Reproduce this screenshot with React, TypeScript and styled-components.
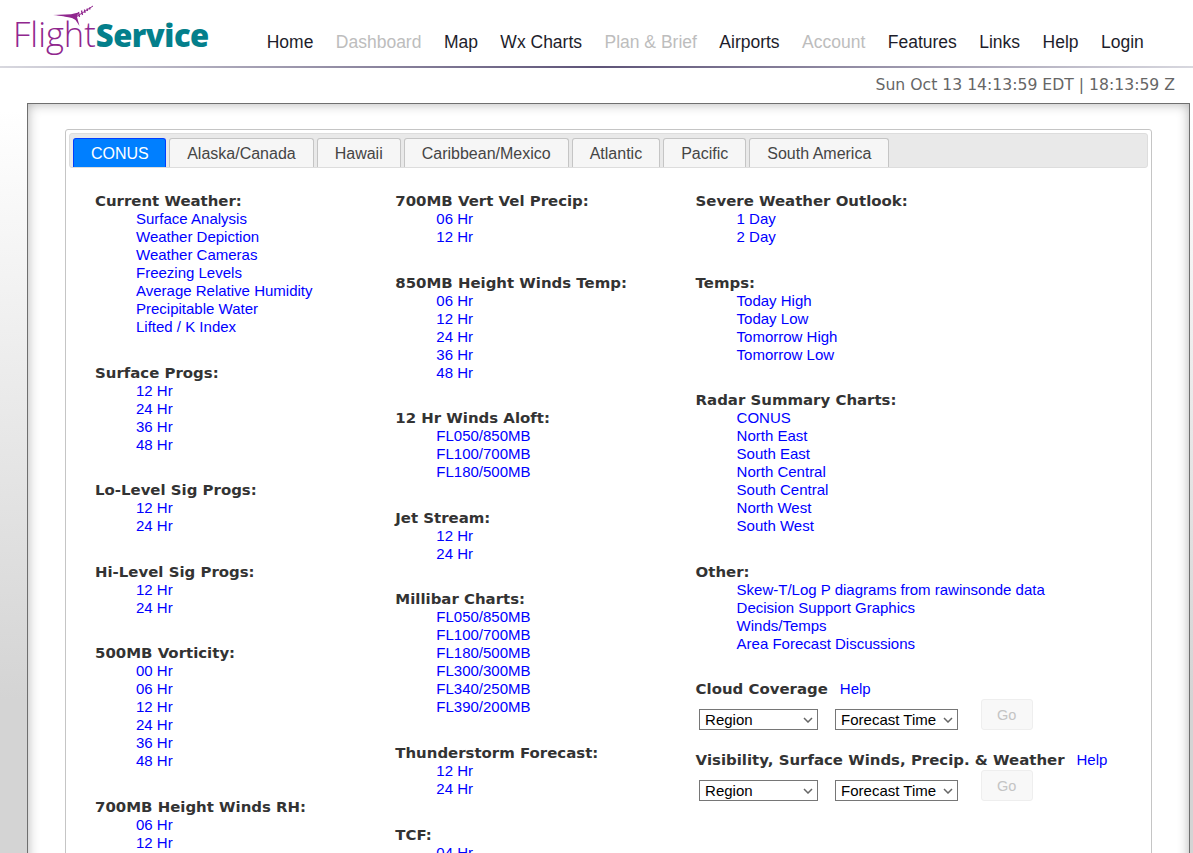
import React from "react";
import styled, { createGlobalStyle } from "styled-components";

const chevron = `url("data:image/svg+xml,%3Csvg xmlns='http://www.w3.org/2000/svg' width='10' height='6' viewBox='0 0 10 6'%3E%3Cpath d='M1 1 L5 5 L9 1' fill='none' stroke='%23666' stroke-width='1.5'/%3E%3C/svg%3E")`;

const Global = createGlobalStyle`
  html, body { margin: 0; padding: 0; height: 853px; overflow: hidden; background: #fff; }
  body { font-family: "Liberation Sans", Arial, sans-serif; }
`;
const Page = styled.div`
  width: 1193px; height: 853px; overflow: hidden;
  background: linear-gradient(to bottom, #ffffff 0, #ffffff 110px, #d4d4d4 700px);
`;
const Header = styled.header`
  height: 66px; background: #fff; display: flex; align-items: flex-start; position: relative;
`;
const Logo = styled.div`
  position: relative; width: 266.7px; height: 66px; flex: none;
`;
const LogoText = styled.div`
  position: absolute; left: 13px; top: 10px; white-space: nowrap; line-height: 48px;
`;
const LogoLight = styled.span`
  font-family: "Open Sans", sans-serif; font-weight: 300; font-size: 34.5px; color: #90278e;
`;
const LogoBold = styled.span`
  font-family: "Open Sans", sans-serif; font-weight: 800; font-size: 31px; letter-spacing: -0.5px; color: #047f8b;
`;
const Bird = styled.svg`
  position: absolute; left: 50px; top: 3px;
`;
const Nav = styled.nav`
  display: flex; gap: 22.45px; padding-top: 32px; font-size: 17.5px; line-height: 20px;
`;
const NavLink = styled.a<{ $off?: boolean }>`
  color: ${p => (p.$off ? "#bdbdbd" : "#1d1d2b")};
  flex: none; white-space: nowrap;
`;
const Rule = styled.div`
  height: 2px;
  background: linear-gradient(to right, #d8d8df 0, #5e5478 50%, #d8d8df 100%);
`;
const Clock = styled.div`
  height: 35px; background: #fff; text-align: right; padding-right: 18px; color: #666;
  font-family: "DejaVu Sans", sans-serif; font-size: 15.65px; line-height: 34px;
`;
const Panel = styled.main`
  margin: 0 3px 0 27px; height: 760px; background: #fff;
  border: 1px solid #6f6f6f; border-bottom: none;
  box-shadow: inset 0 0 12px rgba(0,0,0,.3);
  padding: 25px 37px 0 37px;
`;
const Tabs = styled.div`
  border: 1px solid #c5c5c5; border-radius: 3px; padding: 3px; background: #fff; height: 760px;
`;
const TabBar = styled.div`
  height: 35px; background: #e9e9e9; border: 1px solid #dddddd; border-radius: 3px;
  display: flex; align-items: flex-end; padding-left: 3px; gap: 3px; box-sizing: border-box;
`;
const Tab = styled.div<{ $active?: boolean }>`
  height: 29px; box-sizing: border-box; padding: 0 ${p => (p.$active ? 16.4 : 17)}px 0 17px; border-radius: 3px 3px 0 0;
  border: 1px solid ${p => (p.$active ? "#003eff" : "#c5c5c5")};
  border-bottom: none;
  background: ${p => (p.$active ? "#007fff" : "#f6f6f6")};
  color: ${p => (p.$active ? "#fff" : "#454545")};
  font-size: 16px; line-height: 29px; white-space: nowrap;
`;
const Columns = styled.div`
  display: grid; grid-template-columns: repeat(3, 300.3px); padding: 24px 0 0 26px;
`;
const Column = styled.div``;
const Group = styled.section`
  margin-bottom: 27.6px;
`;
const Heading = styled.div`
  font-family: "DejaVu Sans", sans-serif; font-weight: bold; font-size: 14.95px; line-height: 19px; margin-bottom: -1px; color: #333; white-space: nowrap;
`;
const Item = styled.a`
  display: block; color: #0000ff; font-size: 15px; line-height: 18px; margin-left: 41px; white-space: nowrap;
`;
const FormHead = styled.div`
  display: flex; align-items: baseline; gap: 12px; height: 19px; white-space: nowrap;
`;
const HelpLink = styled.a`
  color: #0000ff; font-size: 15px;
`;
const FormRow = styled.div`
  display: flex; align-items: flex-end; margin: 0 0 21px 3px; width: 340px;
`;
const Select = styled.select<{ $w: number }>`
  flex: none; width: ${p => p.$w}px; height: 21px; font-family: "Liberation Sans", Arial, sans-serif; font-size: 15px;
  appearance: none;
  background: #fff ${chevron} no-repeat right 4px center;
  color: #000; border: 1px solid #767676; border-radius: 0; padding: 0 0 0 5.5px; margin: 0;
  & + & { margin-left: 17px; }
`;
const Go = styled.button`
  flex: none; width: 52px; height: 31px; margin-left: 23px; background: #f8f8f8; border: 1px solid #eeeeee; border-radius: 3px;
  color: #c4c4c4; font-family: "Liberation Sans", Arial, sans-serif; font-size: 14.5px; padding: 0;
`;

const nav: [string, boolean?][] = [
  ["Home"], ["Dashboard", true], ["Map"], ["Wx Charts"], ["Plan & Brief", true],
  ["Airports"], ["Account", true], ["Features"], ["Links"], ["Help"], ["Login"],
];
const hrs = (...h: string[]) => h.map(x => `${x} Hr`);
const data: [string, string[]][][] = [
  [
    ["Current Weather:", ["Surface Analysis", "Weather Depiction", "Weather Cameras", "Freezing Levels", "Average Relative Humidity", "Precipitable Water", "Lifted / K Index"]],
    ["Surface Progs:", hrs("12", "24", "36", "48")],
    ["Lo-Level Sig Progs:", hrs("12", "24")],
    ["Hi-Level Sig Progs:", hrs("12", "24")],
    ["500MB Vorticity:", hrs("00", "06", "12", "24", "36", "48")],
    ["700MB Height Winds RH:", hrs("06", "12", "24")],
  ],
  [
    ["700MB Vert Vel Precip:", hrs("06", "12")],
    ["850MB Height Winds Temp:", hrs("06", "12", "24", "36", "48")],
    ["12 Hr Winds Aloft:", ["FL050/850MB", "FL100/700MB", "FL180/500MB"]],
    ["Jet Stream:", hrs("12", "24")],
    ["Millibar Charts:", ["FL050/850MB", "FL100/700MB", "FL180/500MB", "FL300/300MB", "FL340/250MB", "FL390/200MB"]],
    ["Thunderstorm Forecast:", hrs("12", "24")],
    ["TCF:", hrs("04")],
  ],
  [
    ["Severe Weather Outlook:", ["1 Day", "2 Day"]],
    ["Temps:", ["Today High", "Today Low", "Tomorrow High", "Tomorrow Low"]],
    ["Radar Summary Charts:", ["CONUS", "North East", "South East", "North Central", "South Central", "North West", "South West"]],
    ["Other:", ["Skew-T/Log P diagrams from rawinsonde data", "Decision Support Graphics", "Winds/Temps", "Area Forecast Discussions"]],
  ],
];
const tabs = ["CONUS", "Alaska/Canada", "Hawaii", "Caribbean/Mexico", "Atlantic", "Pacific", "South America"];

const Form = ({ title }: { title: string }) => (
  <>
    <FormHead><Heading>{title}</Heading><HelpLink>Help</HelpLink></FormHead>
    <FormRow>
      <Select $w={119}><option>Region</option></Select>
      <Select $w={123}><option>Forecast Time</option></Select>
      <Go disabled>Go</Go>
    </FormRow>
  </>
);

export default function App() {
  return (
    <Page>
      <Global />
      <Header>
        <Logo>
          <Bird width="46" height="26" viewBox="50 3 46 26">
            <path d="M53 15 L71 14.2 L78.5 12.6 L77 17 L79.5 26 L75.5 20 C73 18 70 17 53 15 Z" fill="#90278e" />
            <path d="M76 17 L93 6" stroke="#90278e" strokeWidth="1" fill="none" />
            <path d="M78.5 12 L79.5 17 M81.5 10.5 L82.5 15 M84.5 9.5 L85 13 M87 8.5 L87.5 11 M89.5 7.5 L90 9.5" stroke="#90278e" strokeWidth="1.3" fill="none" />
          </Bird>
          <LogoText><LogoLight>Flight</LogoLight><LogoBold>Service</LogoBold></LogoText>
        </Logo>
        <Nav>
          {nav.map(([t, off]) => <NavLink key={t} $off={off}>{t}</NavLink>)}
        </Nav>
      </Header>
      <Rule />
      <Clock>Sun Oct 13 14:13:59 EDT | 18:13:59 Z</Clock>
      <Panel>
        <Tabs>
          <TabBar>{tabs.map((t, i) => <Tab key={t} $active={i === 0}>{t}</Tab>)}</TabBar>
          <Columns>
            {data.map((col, i) => (
              <Column key={i}>
                {col.map(([h, items]) => (
                  <Group key={h}>
                    <Heading>{h}</Heading>
                    {items.map(it => <Item key={it}>{it}</Item>)}
                  </Group>
                ))}
                {i === 2 && (<><Form title="Cloud Coverage" /><Form title="Visibility, Surface Winds, Precip. & Weather" /></>)}
              </Column>
            ))}
          </Columns>
        </Tabs>
      </Panel>
    </Page>
  );
}
